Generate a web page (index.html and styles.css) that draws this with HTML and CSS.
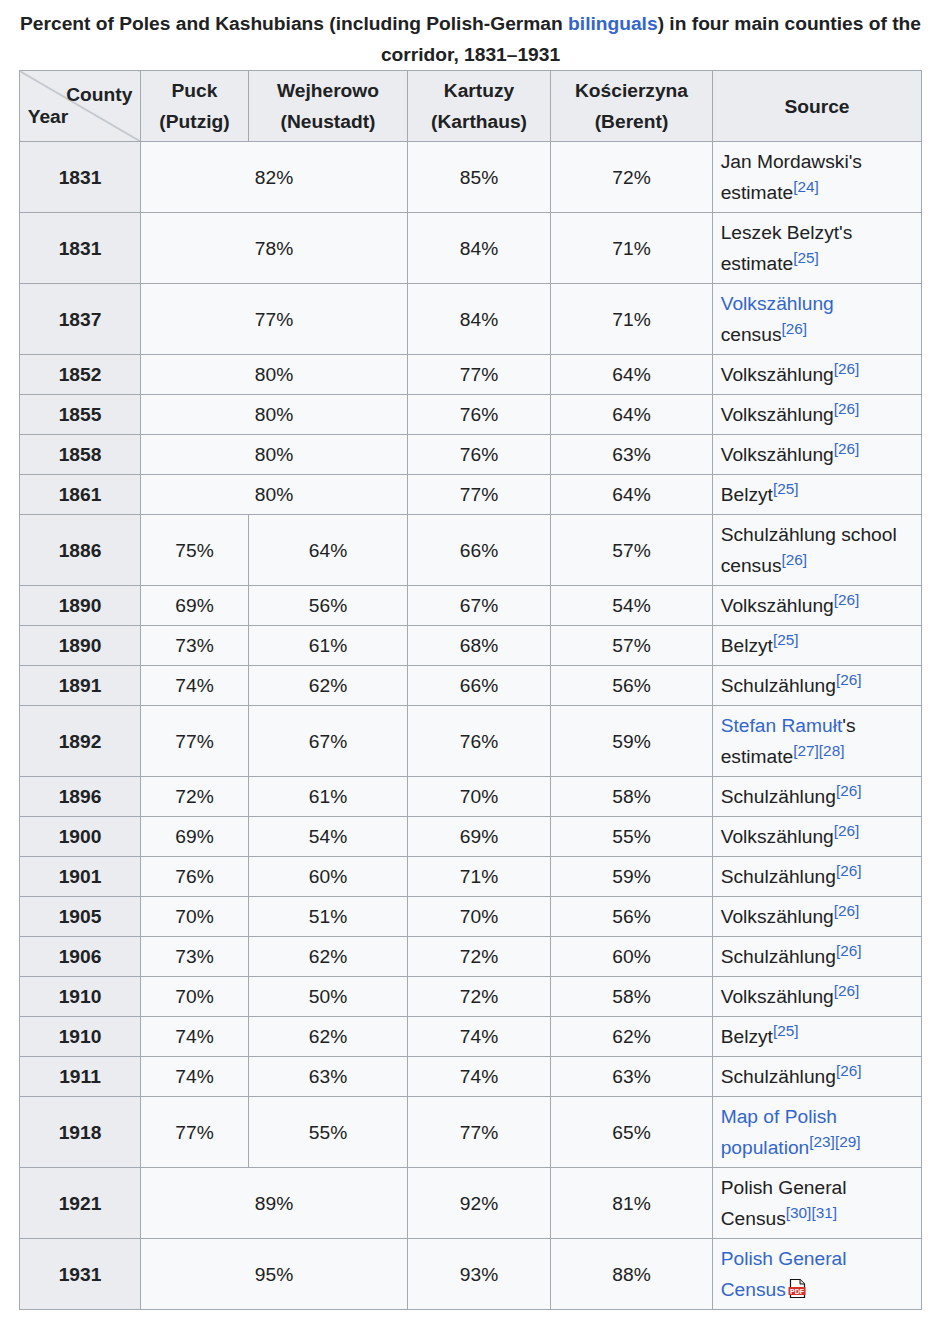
FILE: index.html
```html
<!DOCTYPE html>
<html lang="en">
<head>
<meta charset="utf-8">
<title>Percent of Poles and Kashubians</title>
<link rel="stylesheet" href="styles.css">
</head>
<body>
<div class="page">
<table class="wikitable">
<caption>Percent of Poles and Kashubians (including Polish-German <a href="#">bilinguals</a>) in four main counties of the corridor, 1831–1931</caption>
<colgroup>
<col class="c-year"><col class="c-puck"><col class="c-wej"><col class="c-kar"><col class="c-kos"><col class="c-src">
</colgroup>
<thead>
<tr>
<th class="diag"><div class="diag-top">County</div><div class="diag-bottom">Year</div></th>
<th>Puck<br>(Putzig)</th>
<th>Wejherowo<br>(Neustadt)</th>
<th>Kartuzy<br>(Karthaus)</th>
<th>Kościerzyna<br>(Berent)</th>
<th>Source</th>
</tr>
</thead>
<tbody>
<tr><th>1831</th><td colspan="2">82%</td><td>85%</td><td>72%</td><td class="src">Jan Mordawski's estimate<sup class="ref"><a href="#">[24]</a></sup></td></tr>
<tr><th>1831</th><td colspan="2">78%</td><td>84%</td><td>71%</td><td class="src">Leszek Belzyt's estimate<sup class="ref"><a href="#">[25]</a></sup></td></tr>
<tr><th>1837</th><td colspan="2">77%</td><td>84%</td><td>71%</td><td class="src"><a href="#">Volkszählung</a> census<sup class="ref"><a href="#">[26]</a></sup></td></tr>
<tr><th>1852</th><td colspan="2">80%</td><td>77%</td><td>64%</td><td class="src">Volkszählung<sup class="ref"><a href="#">[26]</a></sup></td></tr>
<tr><th>1855</th><td colspan="2">80%</td><td>76%</td><td>64%</td><td class="src">Volkszählung<sup class="ref"><a href="#">[26]</a></sup></td></tr>
<tr><th>1858</th><td colspan="2">80%</td><td>76%</td><td>63%</td><td class="src">Volkszählung<sup class="ref"><a href="#">[26]</a></sup></td></tr>
<tr><th>1861</th><td colspan="2">80%</td><td>77%</td><td>64%</td><td class="src">Belzyt<sup class="ref"><a href="#">[25]</a></sup></td></tr>
<tr><th>1886</th><td>75%</td><td>64%</td><td>66%</td><td>57%</td><td class="src">Schulzählung school census<sup class="ref"><a href="#">[26]</a></sup></td></tr>
<tr><th>1890</th><td>69%</td><td>56%</td><td>67%</td><td>54%</td><td class="src">Volkszählung<sup class="ref"><a href="#">[26]</a></sup></td></tr>
<tr><th>1890</th><td>73%</td><td>61%</td><td>68%</td><td>57%</td><td class="src">Belzyt<sup class="ref"><a href="#">[25]</a></sup></td></tr>
<tr><th>1891</th><td>74%</td><td>62%</td><td>66%</td><td>56%</td><td class="src">Schulzählung<sup class="ref"><a href="#">[26]</a></sup></td></tr>
<tr><th>1892</th><td>77%</td><td>67%</td><td>76%</td><td>59%</td><td class="src"><a href="#">Stefan Ramułt</a>'s estimate<sup class="ref"><a href="#">[27]</a></sup><sup class="ref"><a href="#">[28]</a></sup></td></tr>
<tr><th>1896</th><td>72%</td><td>61%</td><td>70%</td><td>58%</td><td class="src">Schulzählung<sup class="ref"><a href="#">[26]</a></sup></td></tr>
<tr><th>1900</th><td>69%</td><td>54%</td><td>69%</td><td>55%</td><td class="src">Volkszählung<sup class="ref"><a href="#">[26]</a></sup></td></tr>
<tr><th>1901</th><td>76%</td><td>60%</td><td>71%</td><td>59%</td><td class="src">Schulzählung<sup class="ref"><a href="#">[26]</a></sup></td></tr>
<tr><th>1905</th><td>70%</td><td>51%</td><td>70%</td><td>56%</td><td class="src">Volkszählung<sup class="ref"><a href="#">[26]</a></sup></td></tr>
<tr><th>1906</th><td>73%</td><td>62%</td><td>72%</td><td>60%</td><td class="src">Schulzählung<sup class="ref"><a href="#">[26]</a></sup></td></tr>
<tr><th>1910</th><td>70%</td><td>50%</td><td>72%</td><td>58%</td><td class="src">Volkszählung<sup class="ref"><a href="#">[26]</a></sup></td></tr>
<tr><th>1910</th><td>74%</td><td>62%</td><td>74%</td><td>62%</td><td class="src">Belzyt<sup class="ref"><a href="#">[25]</a></sup></td></tr>
<tr><th>1911</th><td>74%</td><td>63%</td><td>74%</td><td>63%</td><td class="src">Schulzählung<sup class="ref"><a href="#">[26]</a></sup></td></tr>
<tr><th>1918</th><td>77%</td><td>55%</td><td>77%</td><td>65%</td><td class="src"><a href="#">Map of Polish population</a><sup class="ref"><a href="#">[23]</a></sup><sup class="ref"><a href="#">[29]</a></sup></td></tr>
<tr><th>1921</th><td colspan="2">89%</td><td>92%</td><td>81%</td><td class="src">Polish General Census<sup class="ref"><a href="#">[30]</a></sup><sup class="ref"><a href="#">[31]</a></sup></td></tr>
<tr><th>1931</th><td colspan="2">95%</td><td>93%</td><td>88%</td><td class="src"><a href="#" class="pdf">Polish General Census<svg class="pdf-icon" width="18" height="19" viewBox="0 0 18 19" aria-hidden="true"><path d="M2.5 0.5 H12 L16.5 5 V18.5 H2.5 Z" fill="#fff" stroke="#111" stroke-width="1.2"/><path d="M12 0.5 V5 H16.5" fill="#ddd" stroke="#111" stroke-width="1"/><rect x="0.5" y="8" width="17" height="8" fill="#d4332f"/><text x="9" y="14.6" text-anchor="middle" font-family="Liberation Sans, Arial, sans-serif" font-size="7" font-weight="bold" fill="#fff">PDF</text></svg></a></td></tr>
</tbody>
</table>
</div>
</body>
</html>
```

FILE: styles.css
```css
html, body {
  margin: 0;
  padding: 0;
  background: #ffffff;
}

body {
  font-family: "Liberation Sans", Arial, sans-serif;
  color: #202122;
}

.page {
  padding: 8px 0 0 19px;
}

a {
  color: #3366cc;
  text-decoration: none;
}

.wikitable {
  font-size: 19.2px;
  line-height: 31px;
  border-collapse: collapse;
  table-layout: fixed;
  width: 903px;
  background: #f8f9fa;
  color: #202122;
  border: 1px solid #a2a9b1;
}

.wikitable caption {
  font-weight: bold;
  text-align: center;
  padding: 0;
}

.c-year { width: 121px; }
.c-puck { width: 108px; }
.c-wej { width: 159px; }
.c-kar { width: 143px; }
.c-kos { width: 162px; }
.c-src { width: 209px; }

.wikitable th,
.wikitable td {
  border: 1px solid #a2a9b1;
  padding: 4px 7.7px;
  vertical-align: middle;
  text-align: center;
}

.wikitable th {
  background: #eaecf0;
  font-weight: bold;
}

.wikitable td.src {
  text-align: left;
}

.wikitable th.diag {
  background: linear-gradient(to top right, #eaecf0 calc(50% - 1px), #a2a9b1 50%, #eaecf0 calc(50% + 1px));
  line-height: 22px;
}

.diag-top {
  text-align: right;
}

.diag-bottom {
  text-align: left;
}

sup.ref {
  font-size: 80%;
  line-height: 1;
  vertical-align: super;
  font-weight: normal;
}

.pdf-icon {
  vertical-align: -2px;
  margin-left: 2px;
}
```
